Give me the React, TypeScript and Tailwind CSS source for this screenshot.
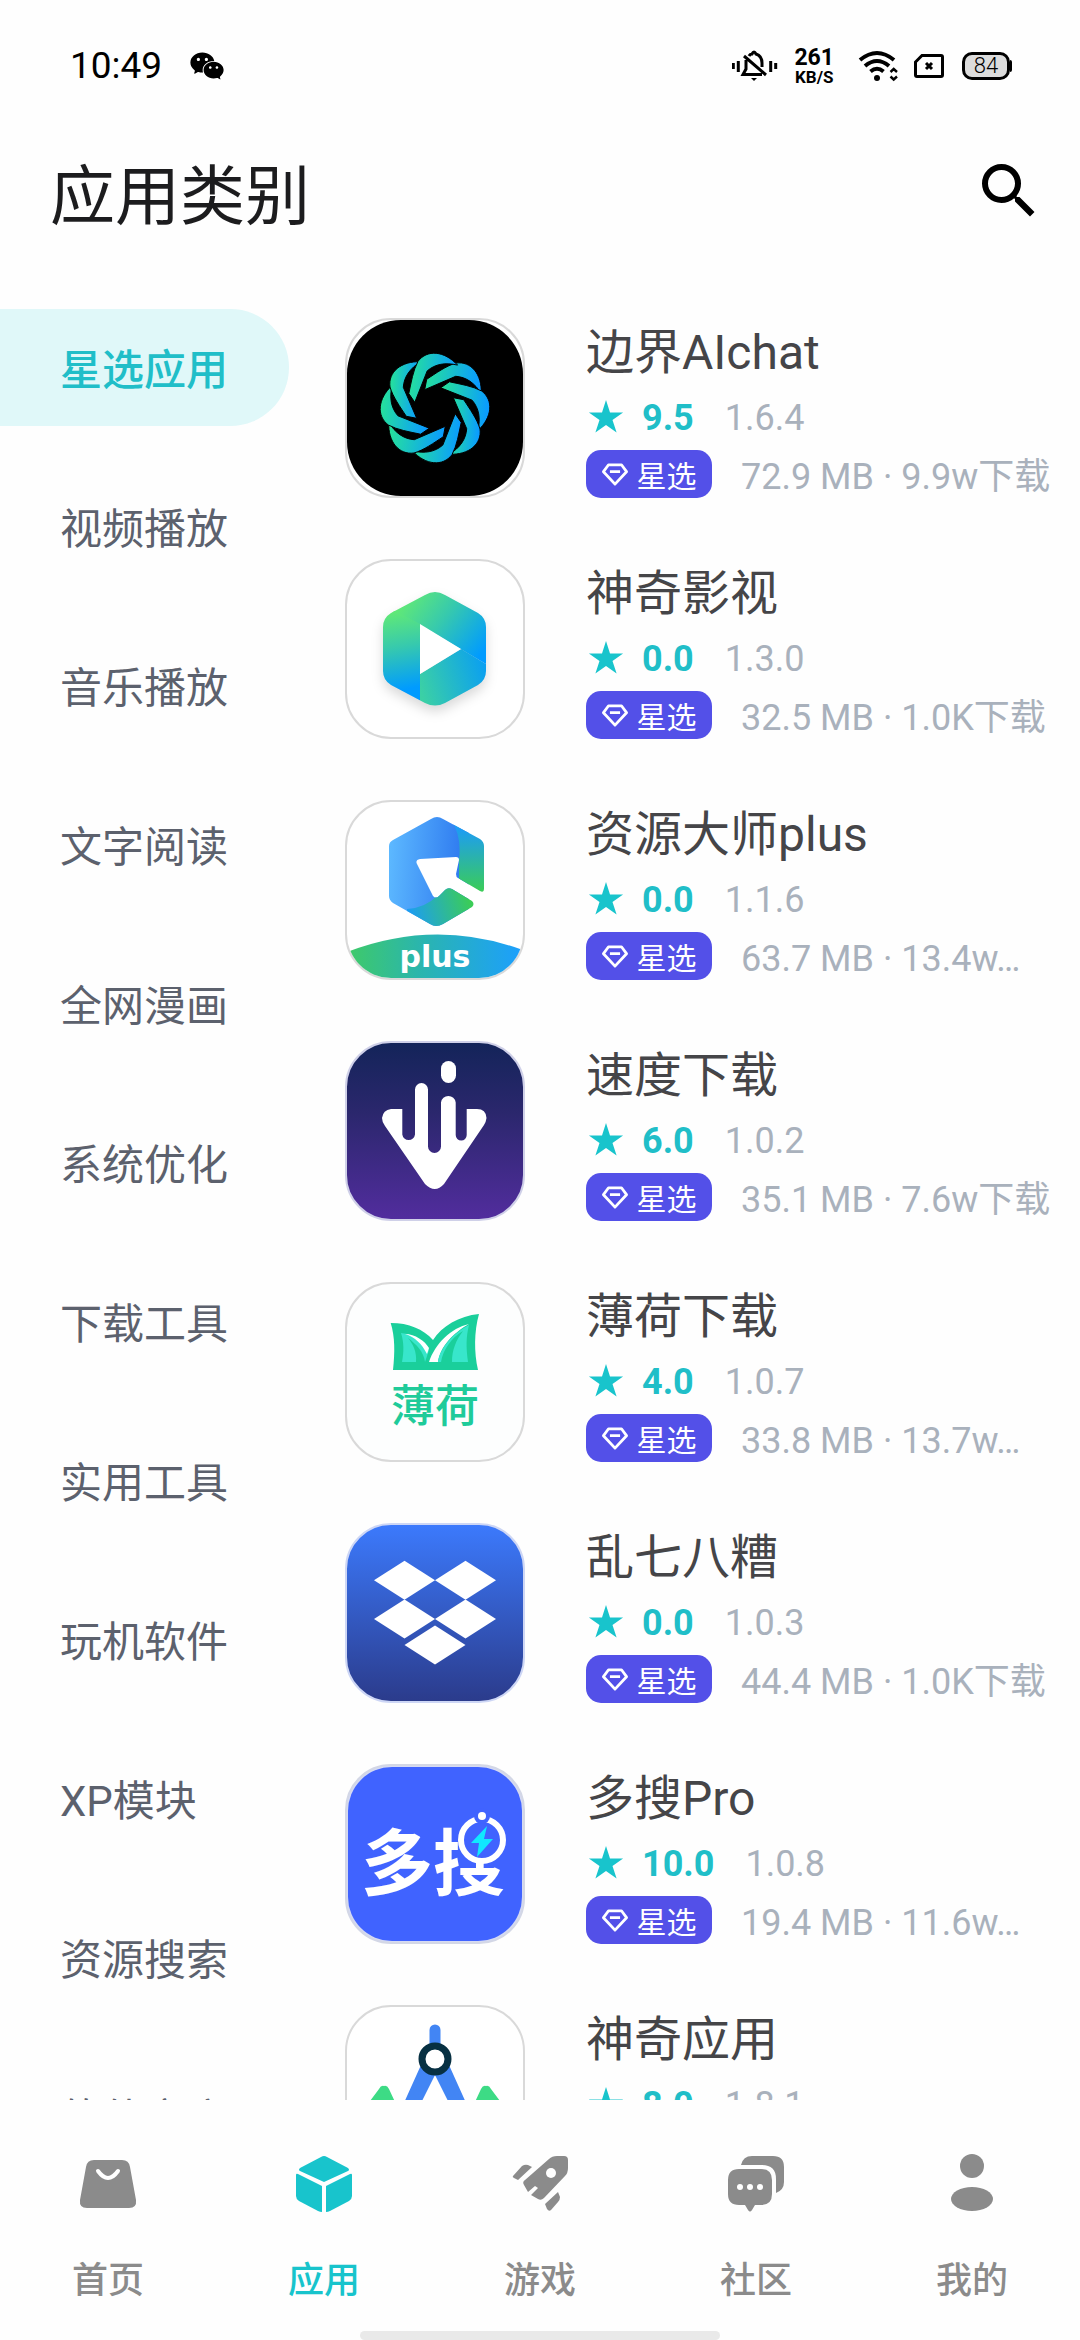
import React, { useState } from 'react';
import { MdSearch } from 'react-icons/md';
import { AiFillWechat } from 'react-icons/ai';

const categories = [
  '星选应用',
  '视频播放',
  '音乐播放',
  '文字阅读',
  '全网漫画',
  '系统优化',
  '下载工具',
  '实用工具',
  '玩机软件',
  'XP模块',
  '资源搜索',
  '软件商店'
];

// Points of one petal of the knot, relative to its centre
const petal = [
  [-10.3, -18.3], [-8.3, -28.7], [1.3, -35], [11, -42], [21, -45],
  [36, -47], [47, -34], [46.3, -14.3], [39.7, -25], [31.3, -31], [20.7, -31.7]
];

const petalPath = (index: number) => {
  const a = (index * Math.PI) / 4;
  const p = petal.map(([x, y]) =>
    `${(90 + x * Math.cos(a) - y * Math.sin(a)).toFixed(1)} ${(90 + x * Math.sin(a) + y * Math.cos(a)).toFixed(1)}`
  );
  return `M${p[0]} L${p[1]} C${p[2]} ${p[3]} ${p[4]} C${p[5]} ${p[6]} ${p[7]} C${p[8]} ${p[9]} ${p[10]} Z`;
};

const Tile = ({ fill = '#ffffff', stroke = '#d9d9d9', children }: { fill?: string; stroke?: string; children: React.ReactNode }) => (
  <svg viewBox="0 0 180 180" className="w-[180px] h-[180px] shrink-0" aria-hidden="true">
    <rect x="1" y="1" width="178" height="178" rx="45" fill={fill} stroke={stroke} strokeWidth="2" />
    {children}
  </svg>
);

const ChatLogo = () => (
  <Tile>
    <defs>
      <linearGradient id="knot" x1="0" y1="0" x2="1" y2="0.1">
        <stop offset="0" stopColor="#27e596" />
        <stop offset="1" stopColor="#0a9cff" />
      </linearGradient>
    </defs>
    <rect x="2" y="2" width="176" height="176" rx="54" fill="#000000" />
    {Array.from({ length: 8 }).map((_, i) => (
      <path key={i} d={petalPath(i)} fill="url(#knot)" stroke="#000000" />
    ))}
  </Tile>
);

const VideoLogo = () => (
  <Tile>
    <defs>
      <clipPath id="hex">
        <path d="M80 36 Q90 30 100 36 L133 54 Q141 59 141 68 V112 Q141 121 133 126 L100 144 Q90 149 80 144 L46 126 Q38 121 38 112 V68 Q38 59 46 54 Z" />
      </clipPath>
      <linearGradient id="hexTop" gradientUnits="userSpaceOnUse" x1="60" y1="42" x2="134" y2="98">
        <stop offset="0" stopColor="#5fe878" />
        <stop offset="0.45" stopColor="#36c9ae" />
        <stop offset="1" stopColor="#009bff" />
      </linearGradient>
      <linearGradient id="hexLeft" gradientUnits="userSpaceOnUse" x1="48" y1="54" x2="62" y2="130">
        <stop offset="0" stopColor="#5fe878" />
        <stop offset="0.45" stopColor="#36c9ae" />
        <stop offset="1" stopColor="#009bff" />
      </linearGradient>
      <linearGradient id="hexBottom" gradientUnits="userSpaceOnUse" x1="75" y1="130" x2="141" y2="112">
        <stop offset="0" stopColor="#3bd0a5" />
        <stop offset="1" stopColor="#0ba0f0" />
      </linearGradient>
    </defs>
    <g className="drop-shadow-[0_6px_6px_rgba(0,0,0,0.15)]">
      <g clipPath="url(#hex)">
        <path d="M38 30 H141 V105 L75 66 L40 50 Z" fill="url(#hexTop)" />
        <path d="M36 46 L50 52 L75 65 V150 H36 Z" fill="url(#hexLeft)" />
        <path d="M75 115 L116 90 L141 105 V150 H75 Z" fill="url(#hexBottom)" />
        <path d="M75 65 L116 90 L75 115 Z" fill="#ffffff" />
      </g>
    </g>
  </Tile>
);

const PlusLogo = () => (
  <Tile>
    <defs>
      <clipPath id="plusHex">
        <path d="M86 19 Q92 15 98 19 L135 39 Q139 42 139 46 V89 Q139 93 135 91 L113 78 Q111 77 111 74 L114 60 Q114 57 111 57 L75 59 Q70 60 72 64 L88 96 Q91 99 94 96 L100 90 Q103 87 107 89 L127 101 Q130 104 127 107 L98 124 Q91 128 85 124 L48 103 Q44 100 44 96 V46 Q44 42 48 40 Z" />
      </clipPath>
      <clipPath id="plusTile">
        <rect x="2" y="2" width="176" height="176" rx="44" />
      </clipPath>
      <linearGradient id="plusBlue" x1="0" y1="0.4" x2="1" y2="0.5">
        <stop offset="0" stopColor="#5cb8ff" />
        <stop offset="1" stopColor="#2a74ee" />
      </linearGradient>
      <linearGradient id="plusRight" x1="0" y1="0" x2="0" y2="1">
        <stop offset="0.2" stopColor="#1d9df2" />
        <stop offset="1" stopColor="#3bcd56" />
      </linearGradient>
      <linearGradient id="plusBottom" x1="0" y1="0.5" x2="1" y2="0.3">
        <stop offset="0" stopColor="#1d9df2" />
        <stop offset="0.9" stopColor="#3bcd56" />
      </linearGradient>
      <linearGradient id="plusBar">
        <stop offset="0" stopColor="#3fca68" />
        <stop offset="0.4" stopColor="#2bb6ab" />
        <stop offset="1" stopColor="#1c9ffe" />
      </linearGradient>
    </defs>
    <g clipPath="url(#plusHex)">
      <rect x="44" y="14" width="80" height="114" fill="url(#plusBlue)" />
      <path d="M106 20 Q117 36 114 60 V92 H142 V14 H106 Z" fill="url(#plusRight)" />
      <path d="M62 109 Q80 108 92 96 L102 84 L132 98 V130 H62 Z" fill="url(#plusBottom)" />
    </g>
    <path d="M2 152 Q90 118 178 150 V180 H2 Z" fill="url(#plusBar)" clipPath="url(#plusTile)" />
    <text x="90" y="167" textAnchor="middle" fill="#ffffff" className="font-['DejaVu_Sans'] font-bold text-[30px]">plus</text>
  </Tile>
);

const DownloadLogo = () => (
  <Tile fill="url(#night)" stroke="#cfd0e8">
    <defs>
      <linearGradient id="night" x1="0" y1="0" x2="0" y2="1">
        <stop offset="0" stopColor="#132459" />
        <stop offset="0.4" stopColor="#2b276d" />
        <stop offset="1" stopColor="#522d9e" />
      </linearGradient>
    </defs>
    <rect x="96" y="20" width="15" height="22" rx="7.5" fill="#ffffff" />
    <path
      d="M46 68 H57.3 V93.5 A6.4 6.4 0 0 0 70 93.5 V48.5 A6.5 6.5 0 0 1 83 48.5 V105.5 A6.5 6.5 0 0 0 96 105.5 V61.5 A7.4 7.4 0 0 1 110.7 61.5 V94 A5.5 5.5 0 0 0 121.7 94 V68 H132 Q141 68 141.5 77 Q141 81 139 84 L99 143 Q90 153 80 143 L40 85 Q37 81 37 77 Q38 69 46 68 Z"
      fill="#ffffff"
    />
  </Tile>
);

const MintLogo = () => (
  <Tile fill="#fdfefe">
    <path d="M45.7 41 C64 41 78 47 88 58 C97 44 114 34 134 32 C129 50 129 70 133 88 H48 C50 70 50 55 45.7 41 Z" fill="#1acf9b" />
    <path d="M56 51 C70 52 80 60 84 68 L80 80 H57 C59 70 59 60 56 51 Z" fill="#38e6cb" />
    <path d="M60 52 C70 52 80 59 84 66 L82 72 C77 62 70 55 60 52 Z" fill="#ffffff" />
    <path d="M63 56 C71 62 79 70 80 80 H71 C72 70 68 62 63 56 Z" fill="#1acf9b" />
    <path d="M124 42 C106 46 90 62 84 80 H93 C95 65 108 51 124 42 Z" fill="#ffffff" />
    <path d="M124 43 C110 50 95 65 93 80 H123 C121 65 121 55 124 43 Z" fill="#38e6cb" />
    <path d="M118 49 C106 56 98 68 96 80 H107 C107 68 111 58 118 49 Z" fill="#1acf9b" />
    <text x="90" y="140" textAnchor="middle" fill="#1fcb9a" className="font-['Noto_Sans_CJK_SC'] font-medium text-[44px]">薄荷</text>
  </Tile>
);

const BoxLogo = () => (
  <Tile fill="url(#box)" stroke="#cdd6f5">
    <defs>
      <linearGradient id="box" x1="0" y1="0" x2="0" y2="1">
        <stop offset="0" stopColor="#3c7afd" />
        <stop offset="1" stopColor="#2b3b8b" />
      </linearGradient>
    </defs>
    {[[59.5, 57.3], [120.5, 57.3], [59.5, 96], [120.5, 96], [90, 122]].map(([x, y]) => (
      <path key={`${x}-${y}`} d={`M${x - 30.5} ${y} L${x} ${y - 19.5} L${x + 30.5} ${y} L${x} ${y + 19.5} Z`} fill="#ffffff" />
    ))}
  </Tile>
);

const SearchLogo = () => (
  <Tile fill="#d5daf3" stroke="#d3d7e6">
    <rect x="3" y="3" width="174" height="174" rx="44" fill="#4063ff" />
    <text x="88" y="125" textAnchor="middle" fill="#ffffff" className="font-['Noto_Sans_CJK_SC'] font-bold text-[72px]">多搜</text>
    <rect x="114" y="50" width="50" height="49" fill="#4063ff" />
    <circle cx="137" cy="76" r="21" fill="none" stroke="#ffffff" strokeWidth="6" />
    <circle cx="137" cy="52" r="8" fill="#4063ff" />
    <circle cx="137" cy="52" r="4" fill="#ffffff" />
    <path d="M142 62 L126 79 H134 L132 93 L148 75 H139 Z" fill="#10e8ff" />
  </Tile>
);

const StudioLogo = () => (
  <Tile>
    <path d="M39 81 Q36 80 34 84 L25 96 V140 H70 L44 84 Q42 80 39 81 Z" fill="#3ddb85" />
    <path d="M141 81 Q144 80 146 84 L155 96 V140 H110 L136 84 Q138 80 141 81 Z" fill="#3ddb85" />
    <path d="M84.500 45 V25 A5.500 5.500 0 0 1 95.500 25 V45 Z" fill="#4285f4" />
    <path d="M76 60 L58 100 H75 L90 70 L105 100 H122 L104 60 Z" fill="#4285f4" />
    <circle cx="90" cy="54" r="13" fill="#ffffff" stroke="#073042" strokeWidth="7" />
  </Tile>
);

const apps = [
  { name: '边界AIchat', score: '9.5', version: '1.6.4', size: '72.9 MB', downloads: '9.9w下载', Logo: ChatLogo },
  { name: '神奇影视', score: '0.0', version: '1.3.0', size: '32.5 MB', downloads: '1.0K下载', Logo: VideoLogo },
  { name: '资源大师plus', score: '0.0', version: '1.1.6', size: '63.7 MB', downloads: '13.4w…', Logo: PlusLogo },
  { name: '速度下载', score: '6.0', version: '1.0.2', size: '35.1 MB', downloads: '7.6w下载', Logo: DownloadLogo },
  { name: '薄荷下载', score: '4.0', version: '1.0.7', size: '33.8 MB', downloads: '13.7w…', Logo: MintLogo },
  { name: '乱七八糟', score: '0.0', version: '1.0.3', size: '44.4 MB', downloads: '1.0K下载', Logo: BoxLogo },
  { name: '多搜Pro', score: '10.0', version: '1.0.8', size: '19.4 MB', downloads: '11.6w…', Logo: SearchLogo },
  { name: '神奇应用', score: '8.0', version: '1.8.1', size: '20.1 MB', downloads: '1.0K下载', Logo: StudioLogo }
];

const tabs = [
  {
    label: '首页',
    icon: (
      <>
        <path d="M16 6 H44 Q51 6 52 13 L58 46 Q59 54 51 54 H9 Q1 54 2 46 L8 13 Q9 6 16 6 Z" fill="currentColor" />
        <path d="M20 17 Q30 31 40 17" fill="none" stroke="#ffffff" strokeWidth="4" strokeLinecap="round" />
      </>
    )
  },
  {
    label: '应用',
    icon: (
      <>
        <path d="M27 3 Q30 1 33 3 L54 14 Q56 16 54 17 L30 28 L6 17 Q4 16 6 14 Z" fill="currentColor" />
        <path d="M4 20 L28 32 V58 Q26 58 24 57 L5 47 Q2 45 2 42 V21 Q2 19 4 20 Z" fill="currentColor" />
        <path d="M56 20 L32 32 V58 Q34 58 36 57 L55 47 Q58 45 58 42 V21 Q58 19 56 20 Z" fill="currentColor" />
      </>
    )
  },
  {
    label: '游戏',
    icon: (
      <>
        <path d="M39 5 Q42 2 47 2 H54 Q58 2 58 6 V14 Q58 19 55 22 L34 44 Q31 47 28 45 L21 41 L28 34 L25 32 L18 38 L14 31 Q12 28 15 26 Z" fill="currentColor" />
        <path d="M3 22 L12 12 Q15 10 18 11 L22 13 L8 26 L4 24 Q2 23 3 22 Z" fill="currentColor" />
        <path d="M48 38 L50 43 Q50 46 48 48 L41 56 Q39 58 37 55 L35 50 Z" fill="currentColor" />
        <circle cx="41" cy="19" r="5" fill="#ffffff" />
      </>
    )
  },
  {
    label: '社区',
    icon: (
      <>
        <path d="M15 11 Q17 2 26 2 H47 Q58 2 58 13 V28 Q58 36 50 39 V25 Q50 11 36 11 Z" fill="currentColor" />
        <path d="M13 15 H35 Q46 15 46 26 V40 Q46 51 35 51 H29 L26 56 Q24 59 22 56 L19 51 H13 Q2 51 2 40 V26 Q2 15 13 15 Z" fill="currentColor" />
        <circle cx="14" cy="33" r="3" fill="#ffffff" />
        <circle cx="24" cy="33" r="3" fill="#ffffff" />
        <circle cx="34" cy="33" r="3" fill="#ffffff" />
      </>
    )
  },
  {
    label: '我的',
    icon: (
      <>
        <circle cx="30" cy="12" r="12" fill="currentColor" />
        <ellipse cx="30" cy="45" rx="21" ry="12" fill="currentColor" />
      </>
    )
  }
];

const StatusBar = () => (
  <div className="flex items-center justify-between h-[132px] shrink-0 pl-[70px] pr-[68px] text-black">
    <div className="flex items-center">
      <span className="text-[37px] leading-[48px]">10:49</span>
      <AiFillWechat className="w-[38px] h-[38px] ml-[26px]" />
    </div>
    <div className="flex items-center gap-4">
      <svg viewBox="0 0 46 32" className="w-[46px] h-8" fill="none" stroke="currentColor" strokeWidth="3">
        <path d="M1.300 13 V19 M6.300 11 V22 M38.700 11 V22 M43.700 13 V19" />
        <path d="M14 10 V19 L11 24.500 H30 M17 6 Q18 4 20 4 Q22 0 24 4 Q30 6 30 13 V17 M12 6 L34 25" />
        <path d="M19 28 H25 L22 31 Z" fill="currentColor" stroke="none" />
      </svg>
      <div className="flex flex-col items-center mr-2 pt-0.5 font-bold">
        <span className="text-[23px] leading-[20px]">261</span>
        <span className="text-[17px] leading-[18px]">KB/S</span>
      </div>
      <svg viewBox="0 0 40 32" className="w-10 h-8" fill="none" stroke="currentColor" strokeWidth="4">
        <path d="M2 10 Q19 -4 36 10 M7 16 Q19 6 31 16 M12.500 21.500 Q19 16 25.500 21.500" />
        <circle cx="19" cy="28" r="3" fill="currentColor" stroke="none" />
        <path d="M32.500 22 L35.700 19 L39 22 M32.500 26.500 L35.700 29.500 L39 26.500" strokeWidth="2.400" />
      </svg>
      <svg viewBox="0 0 30 24" className="w-[30px] h-6" fill="none" stroke="currentColor" strokeWidth="3">
        <path d="M8 1.500 H27 Q28.500 1.500 28.500 3 V21 Q28.500 22.500 27 22.500 H3 Q1.500 22.500 1.500 21 V8 Z" />
        <path d="M12 9 L18 15 M18 9 L12 15" />
      </svg>
      <div className="flex items-center ml-0.5">
        <div className="flex items-center justify-center w-12 h-7 rounded-[10px] border-[3px] border-black bg-[#dcdcdc] text-[22px] leading-[22px] font-light">84</div>
        <div className="w-0.5 h-3 rounded-r-sm bg-black" />
      </div>
    </div>
  </div>
);

export default function App() {
  const [category, setCategory] = useState('星选应用');
  const [tab, setTab] = useState('应用');

  return (
    <div className="flex flex-col h-screen overflow-hidden bg-[#fefefe] font-['Roboto','Noto_Sans_CJK_SC',sans-serif]">
      <StatusBar />

      <header className="flex items-center justify-between h-[118px] shrink-0 pl-[50px] pr-[35px]">
        <h1 className="text-[65px] leading-[80px] text-[#1c1c1e] font-['Noto_Sans_CJK_SC',sans-serif]">应用类别</h1>
        <button type="button" aria-label="搜索" className="text-black">
          <MdSearch className="w-[72px] h-[72px]" />
        </button>
      </header>

      <main className="flex flex-1 min-h-0 gap-14">
        {/* Categories */}
        <aside className="w-[289px] shrink-0 overflow-y-auto [scrollbar-width:none] pt-[59px]">
          <ul className="flex flex-col gap-[42px]">
            {categories.map((item) => (
              <li key={item}>
                <button
                  type="button"
                  onClick={() => setCategory(item)}
                  className={`w-full h-[117px] pl-[60px] pt-1.5 text-left text-[42px] leading-[48px] rounded-r-full ${
                    item === category ? 'bg-[#e0f8f9] text-[#20bec8] font-medium' : 'text-[#5c616d]'
                  }`}
                >
                  {item}
                </button>
              </li>
            ))}
          </ul>
        </aside>

        {/* App list */}
        <ul className="flex flex-col flex-1 min-w-0 gap-[61px] overflow-y-auto [scrollbar-width:none] pt-[68px] pr-6">
          {apps.map(({ name, score, version, size, downloads, Logo }) => (
            <li key={name} className="flex shrink-0 gap-[61px]">
              <Logo />
              <div className="flex-1 min-w-0 pt-[7px]">
                <h2 className="text-[48px] leading-[56px] text-[#454548]">{name}</h2>
                <div className="flex items-center h-[42px] mt-4 text-[36px] leading-[42px]">
                  <svg viewBox="0 0 40 40" className="w-10 h-10 text-[#18c4cc]" aria-hidden="true">
                    <path d="M20 2 L24 14.400 H37.100 L26.500 22.100 L30.600 34.600 L20 26.900 L9.400 34.600 L13.500 22.100 L2.900 14.400 H16 Z" fill="currentColor" />
                  </svg>
                  <span className="ml-4 font-bold text-[#20bec8]">{score}</span>
                  <span className="ml-[31px] text-[#a9b1bc]">{version}</span>
                </div>
                <div className="flex items-end gap-[29px] mt-[11px]">
                  <span className="flex items-center justify-center gap-[9px] w-[126px] h-12 shrink-0 rounded-[15px] bg-[#5350e8] text-white text-[30px] leading-[46px] font-['Noto_Sans_CJK_SC',sans-serif]">
                    <svg viewBox="0 0 28 26" className="w-[26px] h-6" fill="none" stroke="currentColor" strokeWidth="3" strokeLinejoin="round" aria-hidden="true">
                      <path d="M7 3 H21 L26.500 10.500 L14 24 L1.500 10.500 Z M8.500 10.500 H19.500" />
                    </svg>
                    星选
                  </span>
                  <span className="truncate text-[36px] leading-[42px] text-[#a9b1bc]">
                    {size} · {downloads}
                  </span>
                </div>
              </div>
            </li>
          ))}
        </ul>
      </main>

      <nav className="flex flex-col justify-between h-[240px] shrink-0">
        <div className="grid grid-cols-5">
          {tabs.map(({ label, icon }) => (
            <button
              key={label}
              type="button"
              onClick={() => setTab(label)}
              className={`flex flex-col items-center pt-[54px] text-[36px] leading-[52px] font-medium font-['Noto_Sans_CJK_SC',sans-serif] ${
                label === tab ? 'text-[#18c4cc]' : 'text-[#8b8b8b]'
              }`}
            >
              <svg viewBox="0 0 60 60" className="w-[60px] h-[60px] mb-[37px]" aria-hidden="true">{icon}</svg>
              {label}
            </button>
          ))}
        </div>
        <div className="w-1/3 h-[9px] mx-auto rounded-full bg-[#e9e9e9]" />
      </nav>
    </div>
  );
}
